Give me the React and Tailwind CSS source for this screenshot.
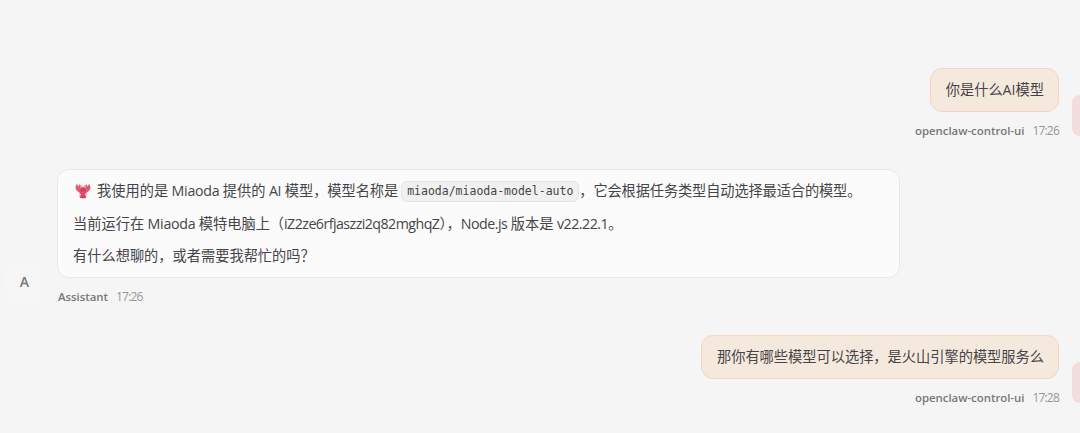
const MESSAGES = [
  { id: 1, role: "user", text: "你是什么AI模型", time: "17:26" },
  { id: 2, role: "assistant", time: "17:26" },
  { id: 3, role: "user", text: "那你有哪些模型可以选择，是火山引擎的模型服务么", time: "17:28" },
];

function Lobster() {
  return (
    <svg viewBox="0 0 16 16" className="w-4 h-4 ml-[2px] mr-[6px] shrink-0" aria-hidden="true">
      <path d="M2 1C-.3 3.500.1 7.500 3.500 9l2.500 2 1.500-4-2-1.500C6.200 4 5.700 2 4.300 1.200L3.500 3.500 2 1Z" fill="#e05c70" />
      <path d="M14 1c2.300 2.500 1.900 6.500-1.500 8L10 11 8.500 7l2-1.500C9.800 4 10.300 2 11.700 1.200l.8 2.300L14 1Z" fill="#e05c70" />
      <path d="M8 4c2.200 0 3 2 2.800 4.500L10.300 12l1 2.500c-1.500 1.200-5 1.200-6.600 0l1-2.500-.5-3.500C5 6 5.800 4 8 4Z" fill="#d6435a" />
      <path d="M6.800 4.500 6.300 2M9.200 4.500l.5-2.500M5.500 10.500 3.500 11.500M6 12.500l-2 1M10.500 10.500l2 1M10 12.500l2 1" stroke="#e9929d" strokeWidth=".9" fill="none" />
      <path d="M6.500 9.500h3M6.800 11.500h2.400" stroke="#e5707f" strokeWidth=".6" />
    </svg>
  );
}

function Meta({ name, time }) {
  return (
    <div className="flex gap-2 text-[11.4px] leading-4">
      <span className="font-semibold text-[#77777b] tracking-[-0.02px]">{name}</span>
      <span className="text-[12px] text-[#96969a] tracking-[-0.8px]">{time}</span>
    </div>
  );
}

function UserMessage({ text, time }) {
  return (
    <div className="flex justify-end items-end gap-[13px] -mr-[54px]">
      <div className="flex flex-col items-end gap-[11px]">
        <div className="h-[44px] pl-[15px] pr-[14px] flex items-center rounded-xl border border-[#f3d5c3] bg-[#f5e9dd]">
          {text}
        </div>
        <Meta name="openclaw-control-ui" time={time} />
      </div>
      <div className="w-[41px] h-[41px] mb-[3px] rounded-lg bg-[#f3dcde]" />
    </div>
  );
}

function AssistantMessage({ time }) {
  return (
    <div className="flex items-end gap-3 pl-[4px]">
      <div className="w-[41px] h-[41px] mb-[3px] flex items-center justify-center rounded-lg bg-[#f6f6f6] text-[14px] font-semibold text-[#77777b]">
        A
      </div>
      <div className="flex flex-col gap-[11px]">
        <div className="w-[843px] h-[109px] pl-[15px] pt-[5px] rounded-xl border border-[#e8e8e8] bg-[#fbfbfb] leading-[32.500px]">
          <p className="flex items-center">
            <Lobster />
            <span>我使用的是</span>
            <span className="mx-[3.500px] tracking-[-0.3px]">Miaoda</span>
            <span>提供的</span>
            <span className="mx-[3.500px] tracking-[-0.3px]">AI</span>
            <span className="tracking-[-0.05px]">模型，模型名称是</span>
            <code className="ml-[3px] h-[21px] px-[5px] flex items-center rounded-md border border-[#e3e3e3] bg-[#f0f0f0] font-['DejaVu_Sans_Mono',monospace] text-[11.500px]">
              miaoda/miaoda-model-auto
            </code>
            <span className="tracking-[-0.12px]">，它会根据任务类型自动选择最适合的模型。</span>
          </p>
          <p className="flex items-center">
            <span>当前运行在</span>
            <span className="mx-[3.500px] tracking-[-0.3px]">Miaoda</span>
            <span>模特电脑上（</span>
            <span className="tracking-[-0.55px]">iZ2ze6rfjaszzi2q82mghqZ</span>
            <span>），</span>
            <span className="mr-[3.500px] tracking-[-0.5px]">Node.js</span>
            <span>版本是</span>
            <span className="ml-[3.500px] tracking-[-0.5px]">v22.22.1</span>
            <span>。</span>
          </p>
          <p>有什么想聊的，或者需要我帮忙的吗？</p>
        </div>
        <div className="pl-px">
          <Meta name="Assistant" time={time} />
        </div>
      </div>
    </div>
  );
}

export default function App() {
  return (
    <div className="h-[433px] overflow-hidden pt-[68px] pr-[21px] flex flex-col gap-[30px] bg-[#f5f5f5] text-[#454549] text-[14.220px] whitespace-nowrap font-['Open_Sans','Noto_Sans_CJK_SC',sans-serif]">
      {MESSAGES.map((m) =>
        m.role === "user" ? (
          <UserMessage key={m.id} text={m.text} time={m.time} />
        ) : (
          <AssistantMessage key={m.id} time={m.time} />
        )
      )}
    </div>
  );
}
